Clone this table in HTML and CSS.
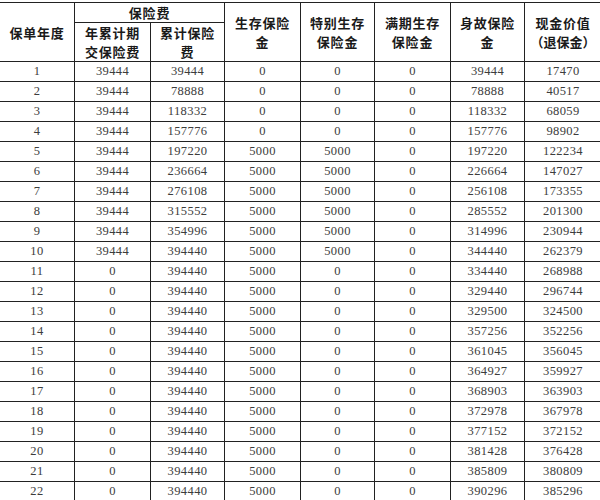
FILE: index.html
```html
<!DOCTYPE html>
<html lang="zh">
<head>
<meta charset="utf-8">
<link rel="stylesheet" href="styles.css">
</head>
<body>
<div class="frame">
<table class="tbl">
<colgroup>
<col class="c1"><col class="c2"><col class="c3"><col class="c4"><col class="c5"><col class="c6"><col class="c7"><col class="c8">
</colgroup>
<thead>
<tr class="h1">
<th rowspan="2">保单年度</th>
<th colspan="2">保险费</th>
<th rowspan="2">生存保险<br>金</th>
<th rowspan="2">特别生存<br>保险金</th>
<th rowspan="2">满期生存<br>保险金</th>
<th rowspan="2">身故保险<br>金</th>
<th rowspan="2">现金价值<br><span class="wide">（退保金）</span></th>
</tr>
<tr class="h2">
<th>年累计期<br>交保险费</th>
<th>累计保险<br>费</th>
</tr>
</thead>
<tbody>
<tr><td>1</td><td>39444</td><td>39444</td><td>0</td><td>0</td><td>0</td><td>39444</td><td>17470</td></tr>
<tr><td>2</td><td>39444</td><td>78888</td><td>0</td><td>0</td><td>0</td><td>78888</td><td>40517</td></tr>
<tr><td>3</td><td>39444</td><td>118332</td><td>0</td><td>0</td><td>0</td><td>118332</td><td>68059</td></tr>
<tr><td>4</td><td>39444</td><td>157776</td><td>0</td><td>0</td><td>0</td><td>157776</td><td>98902</td></tr>
<tr><td>5</td><td>39444</td><td>197220</td><td>5000</td><td>5000</td><td>0</td><td>197220</td><td>122234</td></tr>
<tr><td>6</td><td>39444</td><td>236664</td><td>5000</td><td>5000</td><td>0</td><td>226664</td><td>147027</td></tr>
<tr><td>7</td><td>39444</td><td>276108</td><td>5000</td><td>5000</td><td>0</td><td>256108</td><td>173355</td></tr>
<tr><td>8</td><td>39444</td><td>315552</td><td>5000</td><td>5000</td><td>0</td><td>285552</td><td>201300</td></tr>
<tr><td>9</td><td>39444</td><td>354996</td><td>5000</td><td>5000</td><td>0</td><td>314996</td><td>230944</td></tr>
<tr><td>10</td><td>39444</td><td>394440</td><td>5000</td><td>5000</td><td>0</td><td>344440</td><td>262379</td></tr>
<tr><td>11</td><td>0</td><td>394440</td><td>5000</td><td>0</td><td>0</td><td>334440</td><td>268988</td></tr>
<tr><td>12</td><td>0</td><td>394440</td><td>5000</td><td>0</td><td>0</td><td>329440</td><td>296744</td></tr>
<tr><td>13</td><td>0</td><td>394440</td><td>5000</td><td>0</td><td>0</td><td>329500</td><td>324500</td></tr>
<tr><td>14</td><td>0</td><td>394440</td><td>5000</td><td>0</td><td>0</td><td>357256</td><td>352256</td></tr>
<tr><td>15</td><td>0</td><td>394440</td><td>5000</td><td>0</td><td>0</td><td>361045</td><td>356045</td></tr>
<tr><td>16</td><td>0</td><td>394440</td><td>5000</td><td>0</td><td>0</td><td>364927</td><td>359927</td></tr>
<tr><td>17</td><td>0</td><td>394440</td><td>5000</td><td>0</td><td>0</td><td>368903</td><td>363903</td></tr>
<tr><td>18</td><td>0</td><td>394440</td><td>5000</td><td>0</td><td>0</td><td>372978</td><td>367978</td></tr>
<tr><td>19</td><td>0</td><td>394440</td><td>5000</td><td>0</td><td>0</td><td>377152</td><td>372152</td></tr>
<tr><td>20</td><td>0</td><td>394440</td><td>5000</td><td>0</td><td>0</td><td>381428</td><td>376428</td></tr>
<tr><td>21</td><td>0</td><td>394440</td><td>5000</td><td>0</td><td>0</td><td>385809</td><td>380809</td></tr>
<tr><td>22</td><td>0</td><td>394440</td><td>5000</td><td>0</td><td>0</td><td>390296</td><td>385296</td></tr>
</tbody>
</table>
</div>
</body>
</html>
```
FILE: styles.css
```css
html, body {
  margin: 0;
  padding: 0;
  background: #ffffff;
}
.frame {
  width: 600px;
  height: 500px;
  overflow: hidden;
  padding-top: 2px;
  box-sizing: border-box;
}
.tbl {
  border-collapse: collapse;
  table-layout: fixed;
  width: 602px;
  margin-left: -1px;
}
.c1 { width: 75px; }
.c2 { width: 76px; }
.c3 { width: 74px; }
.c4 { width: 76px; }
.c5 { width: 74px; }
.c6 { width: 76px; }
.c7 { width: 74px; }
.c8 { width: 77px; }
.tbl th, .tbl td {
  border: 1px solid #222222;
  padding: 0;
  text-align: center;
  vertical-align: middle;
}
.tbl th {
  font-family: "Noto Sans CJK SC", "Noto Sans", sans-serif;
  font-weight: 700;
  font-size: 13px;
  line-height: 19px;
  letter-spacing: 0.8px;
  color: #1a1a1a;
}
.wide {
  font-feature-settings: "fwid" 1;
  letter-spacing: 0;
}
.h1 { height: 20px; }
.h2 { height: 38px; }
.tbl td {
  font-family: "Liberation Serif", "DejaVu Serif", serif;
  font-size: 12.5px;
  letter-spacing: 0.4px;
  color: #3c3c3c;
  height: 19px;
  line-height: 19px;
}
```
